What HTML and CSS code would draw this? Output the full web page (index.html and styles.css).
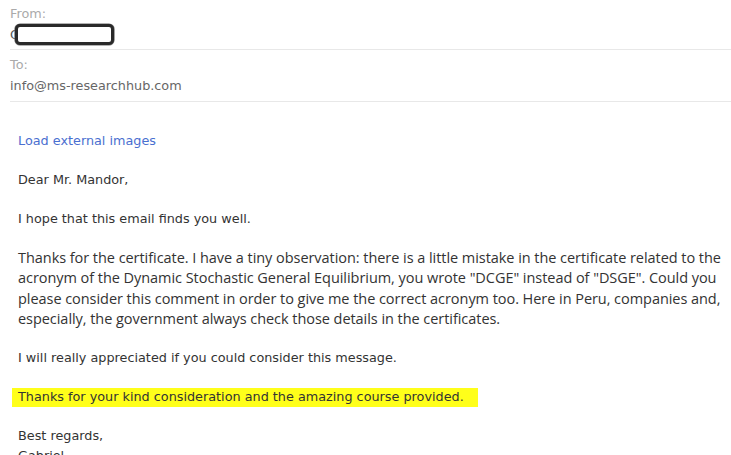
FILE: index.html
```html
<!DOCTYPE html>
<html>
<head>
<meta charset="utf-8">
<link rel="stylesheet" href="styles.css">
</head>
<body>
<div class="header">
  <div class="field">
    <div class="label">From:</div>
    <div class="value"><span class="initial">G</span><span class="redact"></span></div>
  </div>
  <div class="field">
    <div class="label">To:</div>
    <div class="value">info@ms-researchhub.com</div>
  </div>
</div>
<div class="body">
  <p class="link">Load external images</p>
  <p>Dear Mr. Mandor,</p>
  <p>I hope that this email finds you well.</p>
  <p class="narrow">Thanks for the certificate. I have a tiny observation: there is a little mistake in the certificate related to the acronym of the Dynamic Stochastic General Equilibrium, you wrote "DCGE" instead of "DSGE". Could you please consider this comment in order to give me the correct acronym too. Here in Peru, companies and, especially, the government always check those details in the certificates.</p>
  <p>I will really appreciated if you could consider this message.</p>
  <p><span class="hl">Thanks for your kind consideration and the amazing course provided.</span></p>
  <p>Best regards,<br>Gabriel</p>
</div>
</body>
</html>
```
FILE: styles.css
```css
html, body {
  margin: 0;
  padding: 0;
  background: #fff;
  overflow: hidden;
}
body {
  font-family: "DejaVu Sans", sans-serif;
  font-size: 12.8px;
  color: #333;
  padding-left: 10px;
}
.header {
  display: flex;
  flex-direction: column;
}
.field {
  border-bottom: 1px solid #e8e8e8;
  box-sizing: border-box;
}
.field:first-child { height: 50px; padding-top: 5px; }
.field:nth-child(2) { height: 52px; padding-top: 6px; }
.label {
  color: #aaa;
  line-height: 18px;
  height: 20px;
}
.value {
  color: #666;
  line-height: 20px;
  display: flex;
  align-items: center;
}
.initial {
  color: #555;
  width: 6px;
  overflow: hidden;
}
.redact {
  display: inline-block;
  width: 93px;
  height: 15px;
  border: 3px solid #2a2a2a;
  border-radius: 5px;
  margin-left: -1px;
  margin-top: -2px;
  background: #fff;
  box-shadow: 0 0 0.6px 0.6px #666;
}
.body {
  padding-left: 8px;
  padding-top: 29px;
}
.body p {
  margin: 0 0 19px;
  line-height: 20px;
}
.link { color: #4a6fd0; }
.narrow {
  font-family: "Open Sans", sans-serif;
  font-size: 14.5px;
  letter-spacing: -0.05px;
  line-height: 20.3px !important;
}
.hl {
  background: #ffff1a;
  padding: 1px 14px 3px 6px;
  margin-left: -6px;
}
```
